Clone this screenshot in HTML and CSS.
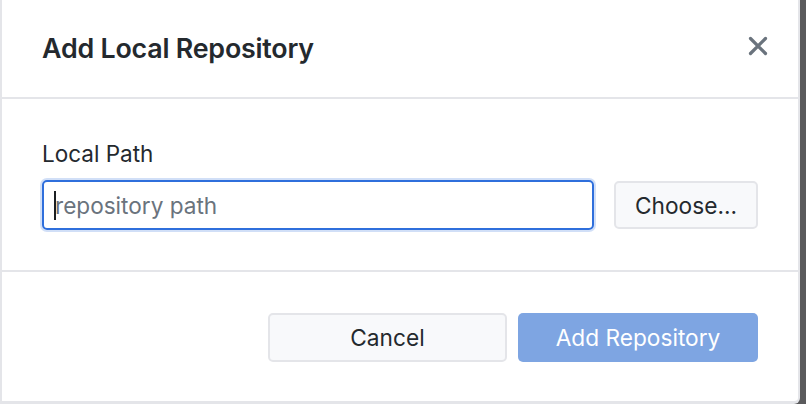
FILE: index.html
```html
<!DOCTYPE html>
<html lang="en">
<head>
<meta charset="utf-8">
<title>Add Local Repository</title>
<link rel="stylesheet" href="styles.css">
</head>
<body>
<div class="dialog">
  <header class="dlg-header">
    <h1 class="dlg-title">Add Local Repository</h1>
    <button class="close-btn" aria-label="Close">
      <svg width="20" height="20" viewBox="0 0 20 20" aria-hidden="true">
        <path d="M2.5 2.5 L17.5 17.5 M17.5 2.5 L2.5 17.5" stroke="#6a737d" stroke-width="3.2" stroke-linecap="round" fill="none"/>
      </svg>
    </button>
  </header>
  <div class="dlg-body">
    <label class="field-label" for="path">Local Path</label>
    <div class="path-row">
      <div class="text-input">
        <span class="caret"></span>
        <input id="path" type="text" placeholder="repository path">
      </div>
      <button class="btn btn-choose">Choose...</button>
    </div>
  </div>
  <footer class="dlg-footer">
    <button class="btn btn-cancel">Cancel</button>
    <button class="btn btn-primary">Add Repository</button>
  </footer>
</div>
</body>
</html>
```
FILE: styles.css
```css
* { box-sizing: border-box; }
html, body { margin: 0; padding: 0; }
body {
  width: 806px;
  height: 404px;
  overflow: hidden;
  background: #5a5a5c;
  font-family: Inter, "Noto Sans", sans-serif;
  color: #24292e;
}
.dialog {
  width: 800px;
  height: 404px;
  background: #ffffff;
  border-left: 2px solid #e4e5e9;
  border-right: 2px solid #e4e5e9;
  border-bottom: 3px solid #e4e5e9;
  border-bottom-right-radius: 6px;
  display: flex;
  flex-direction: column;
}
.dlg-header {
  height: 99px;
  flex-shrink: 0;
  border-bottom: 2px solid #e4e5e9;
  display: flex;
  align-items: center;
  justify-content: space-between;
  padding: 0 20px 0 40px;
}
.dlg-title {
  margin: 0;
  font-size: 26.8px;
  font-weight: 600;
  letter-spacing: -0.2px;
  color: #24292e;
  margin-bottom: 2px;
}
.close-btn {
  width: 40px;
  height: 40px;
  border: 0;
  background: transparent;
  padding: 0;
  display: flex;
  align-items: center;
  justify-content: center;
  margin-bottom: 5px;
}
.dlg-body {
  padding: 42px 40px 40px;
  border-bottom: 2px solid #e4e5e9;
  flex-shrink: 0;
}
.field-label {
  display: block;
  font-size: 22.5px;
  line-height: 26px;
  margin-bottom: 13px;
  color: #24292e;
}
.path-row {
  display: flex;
  align-items: center;
  gap: 20px;
}
.text-input {
  position: relative;
  flex: 1;
  height: 50px;
  border: 2px solid #2f6fdc;
  border-radius: 5px;
  box-shadow: 0 0 0 2px rgba(47, 111, 220, 0.22);
  display: flex;
  align-items: center;
}
.text-input input {
  width: 100%;
  height: 100%;
  border: 0;
  outline: none;
  background: transparent;
  padding: 0 0 0 11px;
  font-family: inherit;
  font-size: 22.6px;
  color: #24292e;
}
.text-input input::placeholder { color: #6a737d; opacity: 1; }
.caret {
  position: absolute;
  left: 10px;
  top: 9px;
  width: 2px;
  height: 29px;
  background: #1b1f23;
}
.btn {
  font-family: inherit;
  font-size: 22.7px;
  border-radius: 5px;
  cursor: default;
  padding: 0;
}
.btn-choose {
  width: 144px;
  height: 48px;
  background: #f8f9fb;
  border: 2px solid #e4e5e9;
  color: #24292e;
}
.dlg-footer {
  display: flex;
  justify-content: flex-end;
  gap: 11px;
  padding: 41px 40px 0;
}
.btn-cancel {
  width: 239px;
  height: 49px;
  background: #f8f9fb;
  border: 2px solid #e4e5e9;
  color: #24292e;
}
.btn-primary {
  width: 240px;
  height: 49px;
  background: #7ea5e2;
  border: 0;
  color: #ffffff;
}
```
